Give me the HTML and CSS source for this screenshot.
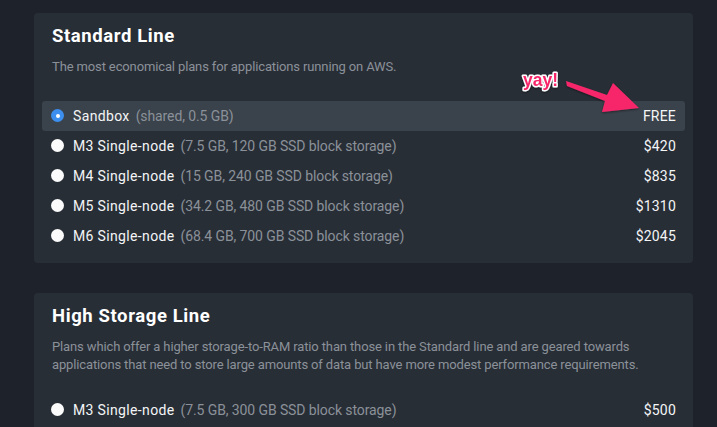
FILE: index.html
```html
<!DOCTYPE html>
<html lang="en">
<head>
<meta charset="utf-8">
<title>Plans</title>
<link rel="stylesheet" href="styles.css">
</head>
<body>
<main class="page">
  <section class="card">
    <h2 class="card-title">Standard Line</h2>
    <p class="card-desc card-desc--short">The most economical plans for applications running on AWS.</p>
    <ul class="plans">
      <li class="plan plan--selected"><span class="radio radio--on"></span><span class="plan-name">Sandbox</span><span class="plan-spec">(shared, 0.5 GB)</span><span class="plan-price">FREE</span></li>
      <li class="plan"><span class="radio"></span><span class="plan-name">M3 Single-node</span><span class="plan-spec">(7.5 GB, 120 GB SSD block storage)</span><span class="plan-price">$420</span></li>
      <li class="plan"><span class="radio"></span><span class="plan-name">M4 Single-node</span><span class="plan-spec">(15 GB, 240 GB SSD block storage)</span><span class="plan-price">$835</span></li>
      <li class="plan"><span class="radio"></span><span class="plan-name">M5 Single-node</span><span class="plan-spec">(34.2 GB, 480 GB SSD block storage)</span><span class="plan-price">$1310</span></li>
      <li class="plan"><span class="radio"></span><span class="plan-name">M6 Single-node</span><span class="plan-spec">(68.4 GB, 700 GB SSD block storage)</span><span class="plan-price">$2045</span></li>
    </ul>
  </section>
  <section class="card">
    <h2 class="card-title">High Storage Line</h2>
    <p class="card-desc">Plans which offer a higher storage-to-RAM ratio than those in the Standard line and are geared towards applications that need to store large amounts of data but have more modest performance requirements.</p>
    <ul class="plans">
      <li class="plan"><span class="radio"></span><span class="plan-name">M3 Single-node</span><span class="plan-spec">(7.5 GB, 300 GB SSD block storage)</span><span class="plan-price">$500</span></li>
    </ul>
  </section>
</main>
<svg class="annotation" width="717" height="427" viewBox="0 0 717 427">
  <defs>
    <filter id="sh" x="-20%" y="-20%" width="140%" height="140%">
      <feDropShadow dx="0" dy="1" stdDeviation="0.8" flood-color="#000" flood-opacity="0.45"/>
    </filter>
  </defs>
  <polygon class="arrow" filter="url(#sh)" points="566,81 607,95 613,83 639,108 602,112 605,101 567,86"/>
  <text class="yay" x="523" y="86" filter="url(#sh)">yay!</text>
</svg>
</body>
</html>
```

FILE: styles.css
```css
html, body {
  margin: 0;
  padding: 0;
}

body {
  background: #1e232b;
  font-family: Roboto, "Noto Sans", sans-serif;
  color: #ffffff;
  width: 717px;
  height: 427px;
  overflow: hidden;
  position: relative;
}

.page {
  display: flex;
  flex-direction: column;
  gap: 30px;
  padding: 13px 24px 0 34px;
}

.card {
  background: #282e36;
  border-radius: 4px;
  padding: 12px 8px 12px 8px;
}

.card-title {
  margin: 0 10px;
  font-size: 18.5px;
  line-height: 22px;
  font-weight: 700;
  letter-spacing: 0.6px;
  color: #ffffff;
}

.card-desc {
  margin: 11px 10px 20px;
  font-size: 13px;
  line-height: 18.5px;
  letter-spacing: -0.13px;
  color: #8b9199;
}

.card-desc--short {
  margin-bottom: 24px;
}

.plans {
  list-style: none;
  margin: 0;
  padding: 0;
}

.plan {
  display: flex;
  align-items: center;
  height: 30px;
  padding: 0 9px;
  border-radius: 3px;
  font-size: 14px;
}

.plan--selected {
  background: #3a424b;
}

.radio {
  width: 13px;
  height: 13px;
  border-radius: 50%;
  background: #fbfbfb;
  flex: none;
  margin-right: 9px;
  box-sizing: border-box;
}

.radio--on {
  background: #3c8fef;
  display: flex;
  align-items: center;
  justify-content: center;
}

.radio--on::after {
  content: "";
  width: 4px;
  height: 4px;
  border-radius: 50%;
  background: #ffffff;
}

.plan-name {
  color: #f4f5f6;
  letter-spacing: 0.35px;
}

.plan-spec {
  color: #8b9199;
  margin-left: 6px;
  letter-spacing: -0.1px;
}

.plan-price {
  margin-left: auto;
  color: #f4f5f6;
  letter-spacing: 0.2px;
}

.annotation {
  position: absolute;
  left: 0;
  top: 0;
  pointer-events: none;
}

.arrow {
  fill: #f7286b;
}

.yay {
  font-family: "Liberation Sans", Arial, sans-serif;
  font-weight: 700;
  font-size: 17.5px;
  fill: #f7286b;
  stroke: #ffffff;
  stroke-width: 3px;
  stroke-linejoin: round;
  paint-order: stroke fill;
}
```
